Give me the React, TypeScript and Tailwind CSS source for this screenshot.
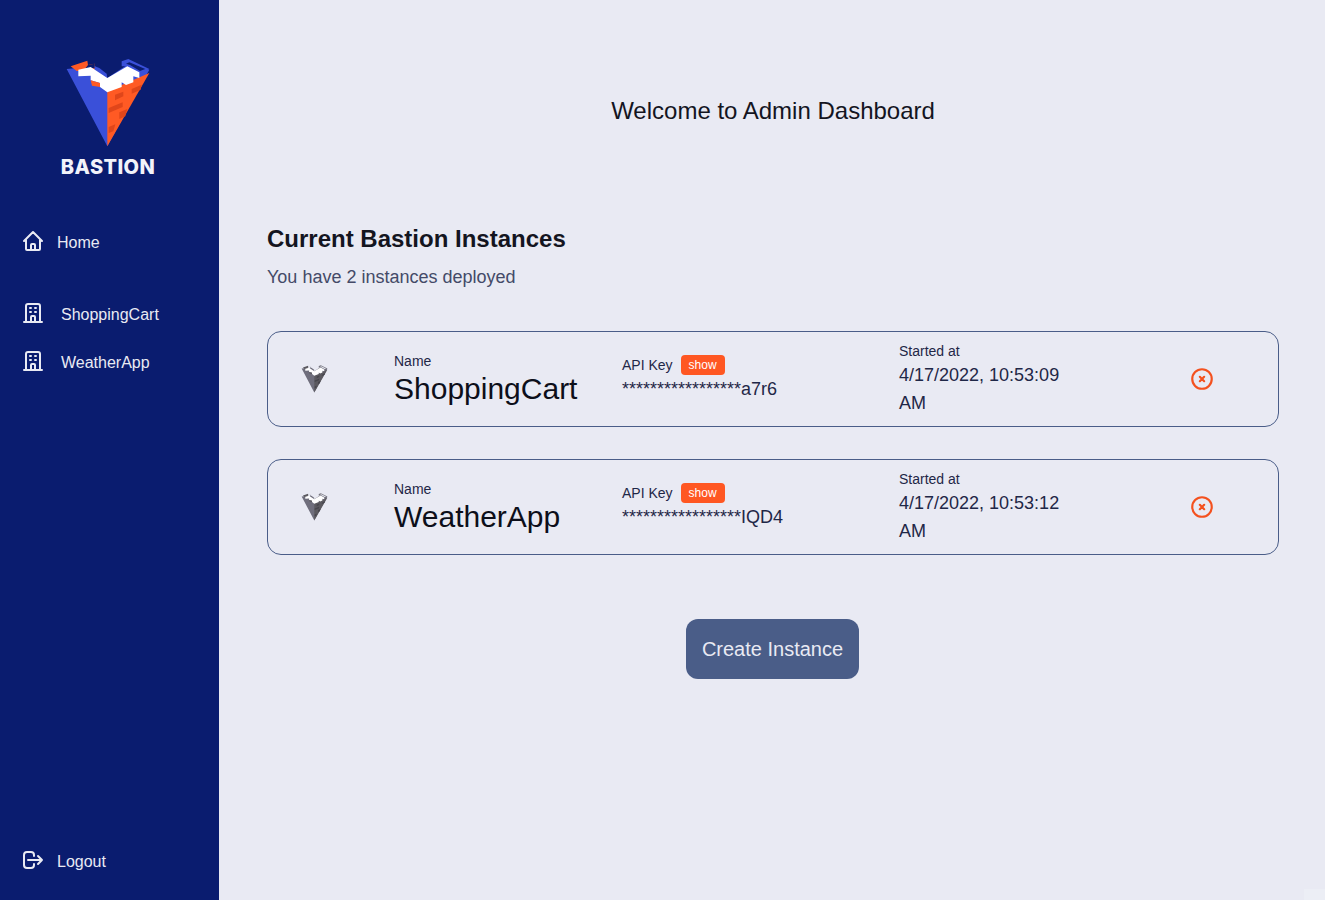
import { HiOutlineHome, HiOutlineOfficeBuilding, HiOutlineLogout, HiOutlineXCircle } from "react-icons/hi";

function Logo({ className, grey }: { className: string; grey?: boolean }) {
  const blue = grey ? "#6f6e7c" : "#3a50d9";
  const orange = grey ? "#5b595f" : "#ff5a24";
  const dark = grey ? "#47464d" : "#e0461a";
  const bg = grey ? "#e9eaf3" : "#0a1c6f";
  return (
    <svg viewBox="45 25 258 270" className={className}>
      <polygon points="50,58 135,50 172,85 240,40 298,60 172,290" fill={blue} />
      <polygon points="172,125 298,70 172,290" fill={orange} />
      <polygon points="62,50 112,33 114,46 134,42 134,60 80,64" fill={orange} />
      <polygon points="114,46 134,42 134,56 106,56" fill={bg} />
      <polygon points="215,35 235,28 298,58 270,70 240,50 215,50" fill={grey ? "#77767f" : "#3a50d9"} />
      <polygon points="228,42 238,38 286,58 270,64 240,46" fill={bg} />
      <polygon points="134,50 148,55 170,72 172,85 134,60" fill={blue} />
      <polygon
        points="85,60 122,52 172,85 232,50 268,68 268,85 250,80 250,98 228,106 215,98 215,112 172,128 150,112 150,100 122,92 122,78 85,80"
        fill="#ffffff"
      />
      <polygon points="122,92 150,100 150,112 126,108" fill={orange} />
      <g fill={dark}>
        <polygon points="195,135 220,126 220,140 195,152" />
        <polygon points="245,118 275,105 272,120 245,132" />
        <polygon points="176,175 218,158 218,172 176,190" />
        <polygon points="208,188 232,178 226,200 208,208" />
        <polygon points="176,232 196,224 190,245 176,250" />
      </g>
    </svg>
  );
}

function NavItem({ icon, label, labelClass }: { icon: React.ReactNode; label: string; labelClass: string }) {
  return (
    <div className="flex items-center pl-[21px] h-[24px] text-[16px] text-[#e9eaf3]">
      {icon}
      <span className={labelClass}>{label}</span>
    </div>
  );
}

function Card({ name, apiKey, started }: { name: string; apiKey: string; started: string }) {
  return (
    <div className="h-[96px] rounded-[14px] border border-[#4a5d88] grid grid-cols-[126px_228px_277px_290px_1fr] items-center">
      <div className="pl-[33px]">
        <Logo grey className="w-[27px] h-[28px]" />
      </div>
      <div className="flex flex-col pt-[4px]">
        <span className="text-[14px] leading-[16px] text-[#1f2747]">Name</span>
        <span className="text-[30px] leading-[40px] text-[#0d0f1a]">{name}</span>
      </div>
      <div className="flex flex-col">
        <div className="flex items-center gap-[8px] h-[20px]">
          <span className="text-[14px] text-[#1f2747]">API Key</span>
          <span className="w-[44px] h-[20px] rounded-[4px] bg-[#ff5722] text-white text-[12px] flex items-center justify-center">show</span>
        </div>
        <span className="text-[18px] leading-[28px] text-[#1f2747]">*****************{apiKey}</span>
      </div>
      <div className="flex flex-col w-[180px]">
        <span className="text-[14px] leading-[18px] text-[#1f2747]">Started at</span>
        <span className="mt-[1px] mb-[-1px] text-[18px] leading-[28px] text-[#1f2747]">{started}</span>
      </div>
      <div>
        <HiOutlineXCircle className="w-[26px] h-[26px] text-[#f4511e]" />
      </div>
    </div>
  );
}

export default function App() {
  return (
    <div className="relative flex h-[900px] overflow-hidden bg-[#e9eaf3] font-['Liberation_Sans',Arial,sans-serif]">
      <aside className="w-[219px] shrink-0 bg-[#0a1c6f] flex flex-col pt-[58px] pb-[28px]">
        <div className="flex flex-col items-center pr-[3px]">
          <Logo className="w-[86px] h-[90px]" />
          <span className="mt-[7px] text-[20px] leading-[24px] font-extrabold tracking-[0.4px] text-[#f2f3fa] font-['Inter',sans-serif]">BASTION</span>
        </div>
        <div className="mt-[50px]">
          <NavItem icon={<HiOutlineHome className="w-[24px] h-[24px]" />} label="Home" labelClass="ml-[12px] pt-[4px]" />
        </div>
        <div className="mt-[48px] flex flex-col gap-[24px]">
          <NavItem icon={<HiOutlineOfficeBuilding className="w-[24px] h-[24px]" />} label="ShoppingCart" labelClass="ml-[16px] pt-[4px]" />
          <NavItem icon={<HiOutlineOfficeBuilding className="w-[24px] h-[24px]" />} label="WeatherApp" labelClass="ml-[16px] pt-[4px]" />
        </div>
        <div className="mt-auto">
          <NavItem icon={<HiOutlineLogout className="w-[24px] h-[24px]" />} label="Logout" labelClass="ml-[12px] pt-[4px]" />
        </div>
      </aside>
      <main className="flex-1 pl-[48px] pr-[46px] pt-[97px]">
        <h1 className="text-[24px] leading-[28px] text-center text-[#14151f]">Welcome to Admin Dashboard</h1>
        <h2 className="mt-[100px] text-[24px] leading-[28px] font-bold text-[#14151f]">Current Bastion Instances</h2>
        <p className="mt-[12px] text-[18px] leading-[24px] text-[#444a68]">You have 2 instances deployed</p>
        <div className="mt-[42px] flex flex-col gap-[32px]">
          <Card name="ShoppingCart" apiKey="a7r6" started="4/17/2022, 10:53:09 AM" />
          <Card name="WeatherApp" apiKey="IQD4" started="4/17/2022, 10:53:12 AM" />
        </div>
        <div className="mt-[64px] flex justify-center pr-[2px]">
          <button className="w-[173px] h-[60px] pl-[1px] rounded-[12px] bg-[#4a5d88] text-[20px] text-[#e9eaf3]">Create Instance</button>
        </div>
      </main>
      <div className="absolute right-0 bottom-0 w-[21px] h-[11px] bg-[#eceef5]" />
    </div>
  );
}
